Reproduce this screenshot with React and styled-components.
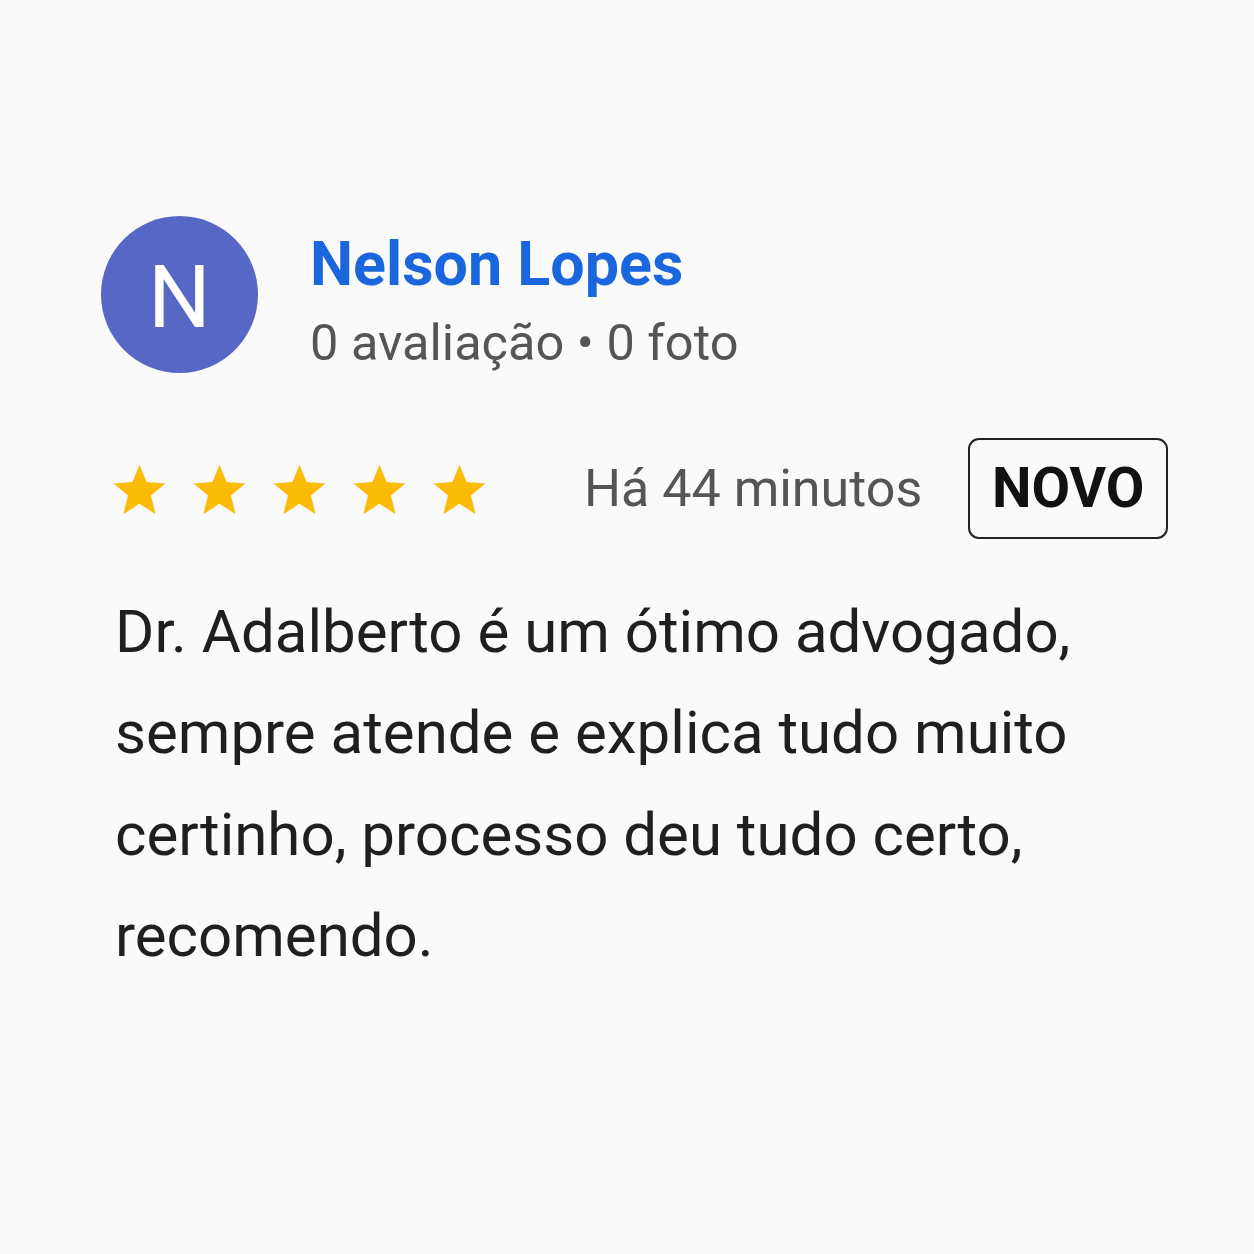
import styled, { createGlobalStyle } from 'styled-components';

const GlobalStyle = createGlobalStyle`
  html, body {
    margin: 0;
    background: #fafafa;
  }
  body {
    font-family: Roboto, "Liberation Sans", sans-serif;
  }
`;

const Page = styled.div`
  width: 1254px;
  height: 1254px;
  box-sizing: border-box;
  padding: 216px 0 0 101px;
  display: flex;
  flex-direction: column;
`;

const Header = styled.div`
  display: flex;
  align-items: center;
  gap: 52px;
`;

const Avatar = styled.div`
  width: 157px;
  height: 157px;
  border-radius: 50%;
  background: ${(p) => p.$color};
  color: #fff;
  display: flex;
  align-items: center;
  justify-content: center;
  font-size: 88px;
  font-weight: 400;
  padding-top: 4px;
  box-sizing: border-box;
`;

const Author = styled.div`
  display: flex;
  flex-direction: column;
  gap: 12px;
  margin-top: 12px;
`;

const Name = styled.div`
  color: #1a66dc;
  font-size: 61px;
  font-weight: 700;
  line-height: 1.2;
`;

const Meta = styled.div`
  color: #555;
  font-size: 50.5px;
  line-height: 1.2;
`;

const RatingRow = styled.div`
  display: flex;
  align-items: center;
  margin-top: 64px;
  padding-left: 11px;
`;

const Stars = styled.div`
  display: flex;
  gap: 25px;
  margin-right: 97px;
`;

const Star = styled.svg`
  width: 55px;
  height: 55px;
  fill: #fbbc05;
`;

const Time = styled.span`
  color: #555;
  font-size: 52px;
  margin-right: 46px;
`;

const Badge = styled.span`
  box-sizing: border-box;
  width: 200px;
  height: 101px;
  border: 2.5px solid #222;
  border-radius: 11px;
  display: flex;
  align-items: center;
  justify-content: center;
  color: #111;
  font-size: 56px;
  font-weight: 700;
`;

const Body = styled.p`
  margin: 42px 0 0 14px;
  width: 1010px;
  color: #1f1f1f;
  font-size: 60px;
  line-height: 101.5px;
`;

function StarIcon() {
  return (
    <Star viewBox="0 0 24 24">
      <path d="M12 1.6l3.1 7.6 8.2.6-6.3 5.3 2 8-7-4.4-7 4.4 2-8L.7 9.8l8.2-.6z" />
    </Star>
  );
}

export default function App() {
  return (
    <>
      <GlobalStyle />
      <Page>
        <Header>
          <Avatar $color="#5767c6">N</Avatar>
          <Author>
            <Name>Nelson Lopes</Name>
            <Meta>0 avaliação • 0 foto</Meta>
          </Author>
        </Header>
        <RatingRow>
          <Stars>
            {[0, 1, 2, 3, 4].map((i) => (
              <StarIcon key={i} />
            ))}
          </Stars>
          <Time>Há 44 minutos</Time>
          <Badge>NOVO</Badge>
        </RatingRow>
        <Body>
          Dr. Adalberto é um ótimo advogado, sempre atende e explica tudo muito
          certinho, processo deu tudo certo, recomendo.
        </Body>
      </Page>
    </>
  );
}
